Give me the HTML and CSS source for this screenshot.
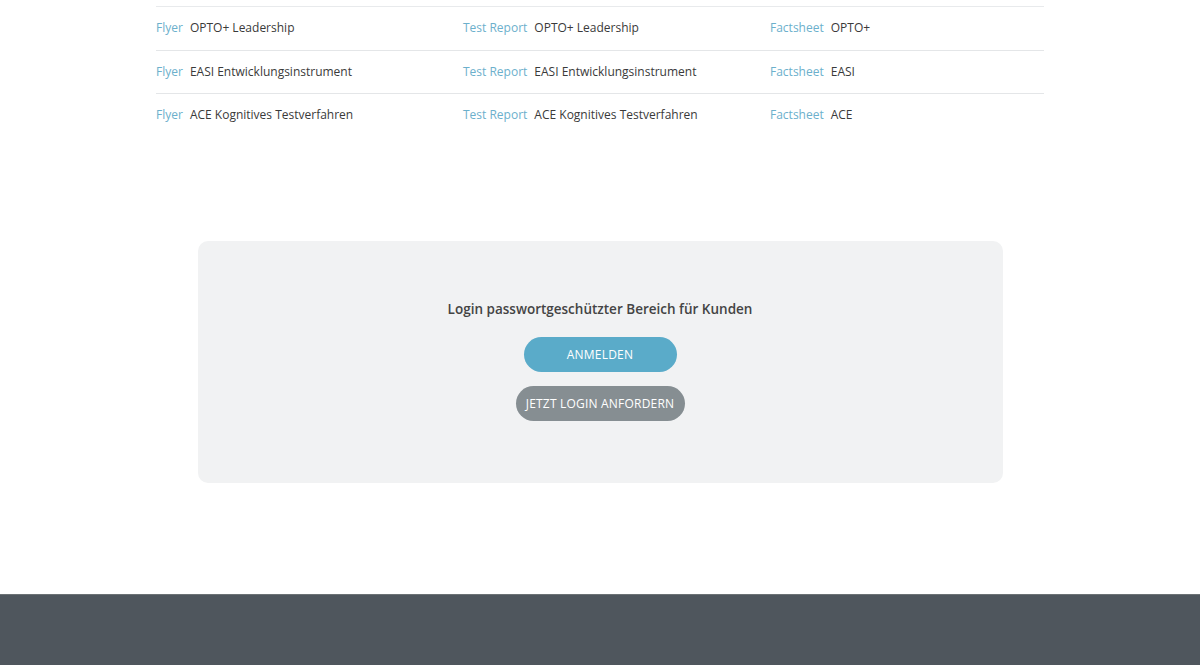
FILE: index.html
```html
<!DOCTYPE html>
<html lang="de">
<head>
    <meta charset="UTF-8">
    <title>Downloads</title>
    <link rel="stylesheet" href="styles.css">
</head>
<body>
    <!-- Dokumente zu den Verfahren -->
    <div class="downloads">
        <div class="dl-row">
            <div class="dl-cell"><a class="dl-type">Flyer</a><span class="dl-name">OPTO+ Leadership</span></div>
            <div class="dl-cell"><a class="dl-type">Test Report</a><span class="dl-name">OPTO+ Leadership</span></div>
            <div class="dl-cell"><a class="dl-type">Factsheet</a><span class="dl-name">OPTO+</span></div>
        </div>
        <div class="dl-row">
            <div class="dl-cell"><a class="dl-type">Flyer</a><span class="dl-name">EASI Entwicklungsinstrument</span></div>
            <div class="dl-cell"><a class="dl-type">Test Report</a><span class="dl-name">EASI Entwicklungsinstrument</span></div>
            <div class="dl-cell"><a class="dl-type">Factsheet</a><span class="dl-name">EASI</span></div>
        </div>
        <div class="dl-row">
            <div class="dl-cell"><a class="dl-type">Flyer</a><span class="dl-name">ACE Kognitives Testverfahren</span></div>
            <div class="dl-cell"><a class="dl-type">Test Report</a><span class="dl-name">ACE Kognitives Testverfahren</span></div>
            <div class="dl-cell"><a class="dl-type">Factsheet</a><span class="dl-name">ACE</span></div>
        </div>
    </div>

    <!-- Kundenbereich -->
    <div class="login-box">
        <h4>Login passwortgeschützter Bereich für Kunden</h4>
        <a class="btn btn-primary">Anmelden</a>
        <a class="btn btn-grey">Jetzt Login anfordern</a>
    </div>

    <footer class="footer"></footer>
</body>
</html>
```

FILE: styles.css
```css
body {
    margin: 0;
    font-family: "Open Sans", "Noto Sans", sans-serif;
    color: #3c3f42;
    background: #fff;
}

.downloads {
    width: 888px;
    margin: 6px auto 0;
}

.dl-row {
    display: grid;
    grid-template-columns: 307px 307px 1fr;
    height: 42.5px;
    align-items: center;
    border-top: 1px solid #e4e6e8;
}

.dl-row:first-child {
    border-top-color: #e8eaec;
}

.dl-cell {
    font-size: 12px;
    white-space: nowrap;
    padding-bottom: 1px;
}

.dl-type {
    color: #6cb0cc;
    margin-right: 7px;
}

.dl-name {
    color: #3a3a3a;
}

.login-box {
    width: 805px;
    height: 242px;
    margin: 104.5px auto 0;
    box-sizing: border-box;
    padding-top: 59px;
    background: #f1f2f3;
    border-radius: 10px;
    display: flex;
    flex-direction: column;
    align-items: center;
}

.login-box h4 {
    margin: 0 0 19px;
    font-size: 13.5px;
    font-weight: 600;
    color: #444;
}

.btn {
    display: block;
    height: 35px;
    line-height: 35px;
    border-radius: 18px;
    color: #fff;
    font-size: 12px;
    letter-spacing: 0.2px;
    text-transform: uppercase;
    text-align: center;
    cursor: pointer;
}

.btn-primary {
    width: 153px;
    background: #5aabc9;
    margin-bottom: 14px;
}

.btn-grey {
    width: 169px;
    background: #868e92;
}

.footer {
    margin-top: 111px;
    height: 71px;
    background: #4f565d;
    border-top: 1px solid #6c7275;
}
```
